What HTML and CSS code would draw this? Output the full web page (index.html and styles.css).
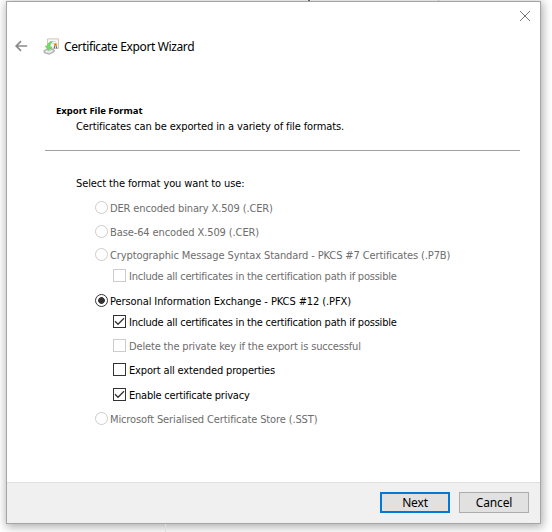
FILE: index.html
```html
<!DOCTYPE html>
<html lang="en">
<head>
<meta charset="utf-8">
<title>Certificate Export Wizard</title>
<link rel="stylesheet" href="styles.css">
</head>
<body>
<i class="edge-top"></i><i class="edge-bottom"></i><i class="edge-tick"></i>
<main class="window">
  <div class="caption">
    <svg width="10" height="10" viewBox="0 0 10 10"><path d="M0 0l10 10M10 0L0 10" stroke="#777" stroke-width="1" fill="none"/></svg>
  </div>
  <header class="title">
    <svg class="back" width="13" height="12" viewBox="0 0 13 12"><path d="M12.2 6H1.4M6 1.2L1.2 6L6 10.8" fill="none" stroke="#8a8a8a" stroke-width="1.7"/></svg>
    <svg class="cert" width="17" height="17" viewBox="0 0 17 17">
      <path d="M4.5 .9h11v9.6h-11z" fill="#f6f7f6" stroke="#d3c6ae"/>
      <path d="M7 3.5h6M9 5.5h3" stroke="#d5dce4"/>
      <path d="M1 12.5l5-2.2 5.5 1.7-.5 2-5 2.3-5-1.6z" fill="#d2d5d5" stroke="#8f9496" stroke-width=".7"/>
      <path d="M3 13.2l3.3 1 3-1.5" stroke="#f7f8f8" fill="none"/>
      <path d="M11.6 8.2l-.3 2.2M13.3 8.2l.4 2.2" fill="none" stroke="#3276d2" stroke-width="1.2"/>
      <circle cx="12.5" cy="6.8" r="1.7" fill="#f0a52a"/><circle cx="12.4" cy="6.6" r=".7" fill="#c37510"/>
      <path d="M9.5 3.5C6 3.8 4.6 5.8 4.5 8H2.3l3 4.3L9.2 9H6.9C7 6.7 7.8 5 9.5 3.5z" fill="#74df63" stroke="#50bc46" stroke-width=".5"/>
    </svg>
    <h1>Certificate Export Wizard</h1>
  </header>
  <section class="intro">
    <h2>Export File Format</h2>
    <p>Certificates can be exported in a variety of file formats.</p>
  </section>
  <form class="options">
    <p class="prompt">Select the format you want to use:</p>
    <div class="row off g3"><i class="radio"></i><span class="t1">DER encoded binary X.509 (.CER)</span></div>
    <div class="row off g3"><i class="radio"></i><span class="t2">Base-64 encoded X.509 (.CER)</span></div>
    <div class="row off g2"><i class="radio"></i><span class="t3">Cryptographic Message Syntax Standard - PKCS #7 Certificates (.P7B)</span></div>
    <div class="row off sub"><i class="check"></i><span class="t4">Include all certificates in the certification path if possible</span></div>
    <div class="row g4"><i class="radio on"></i><span class="t5">Personal Information Exchange - PKCS #12 (.PFX)</span></div>
    <div class="row sub"><i class="check"><svg width="11" height="11" viewBox="0 0 11 11"><path d="M1 5.3l3 3L10 2.2"/></svg></i><span class="t6">Include all certificates in the certification path if possible</span></div>
    <div class="row off sub g3"><i class="check"></i><span class="t7">Delete the private key if the export is successful</span></div>
    <div class="row sub g3"><i class="check"></i><span class="t8">Export all extended properties</span></div>
    <div class="row sub g4"><i class="check"><svg width="11" height="11" viewBox="0 0 11 11"><path d="M1 5.3l3 3L10 2.2"/></svg></i><span class="t9">Enable certificate privacy</span></div>
    <div class="row off g3"><i class="radio"></i><span class="t10">Microsoft Serialised Certificate Store (.SST)</span></div>
  </form>
  <footer class="actions">
    <button class="primary" type="button">Next</button>
    <button type="button">Cancel</button>
  </footer>
</main>
</body>
</html>
```
FILE: styles.css
```css
* { box-sizing: border-box; }
body {
  margin: 0; width: 552px; height: 532px; padding: 1px 0 0 6px;
  overflow: hidden; position: relative; background: #fff;
  font: 11px/20px "DejaVu Sans Condensed", "Noto Sans", sans-serif; color: #000;
}
h1, h2, p { margin: 0; font-weight: 400; white-space: nowrap; }
.window {
  position: relative; width: 535px; height: 523px; display: flex; flex-direction: column;
  border: 1px solid #a5a5a5; background: #fff;
  box-shadow: 1px 2px 9px 1px rgba(0,0,0,.32);
}
.edge-top { position: absolute; left: 308px; top: 0; width: 2px; height: 1px; background: #666; z-index: 1; }
.edge-bottom { position: absolute; left: 165px; top: 524px; width: 1px; height: 8px; background: #ddd; z-index: 1; }
.edge-tick { position: absolute; left: 438px; top: 0; width: 1px; height: 1px; background: #bbb; z-index: 1; }
.caption { height: 29px; padding: 9px 10px 0 0; display: flex; justify-content: flex-end; }
.title { display: flex; align-items: center; height: 30px; padding-left: 8px; }
.cert { margin: 0 4px 0 15px; }
.title h1 { font: 12px/20px "Noto Sans", sans-serif; letter-spacing: -.37px; padding-top: 2px; }
.intro { margin: 40px 20px 0 38px; height: 50px; border-bottom: 1px solid #a0a0a0; padding-left: 11px; }
.intro h2 { font: 700 9.5px/16px "Noto Sans", sans-serif; letter-spacing: -.03px; padding-top: 2px; }
.intro p { padding: 0 0 0 20px; line-height: 16px; letter-spacing: -.12px; }
.options { flex: 1; padding: 21px 0 0 88px; }
.prompt { margin-left: -19px; padding-top: 1px; line-height: 21px; height: 22px; letter-spacing: -.1px; }
.row { display: flex; align-items: center; height: 21px; white-space: nowrap; }
.row span { padding-top: 2px; }
.t1 { letter-spacing: -.13px; }
.t2 { letter-spacing: -.1px; }
.t3 { letter-spacing: -.11px; }
.t4, .t6 { letter-spacing: -.22px; }
.t5 { letter-spacing: -.09px; }
.t7 { letter-spacing: -.16px; }
.t8 { letter-spacing: -.15px; }
.t9 { letter-spacing: -.22px; }
.t10 { letter-spacing: -.12px; }
.off { color: #6d6d6d; }
.sub { padding-left: 18px; }
.g2 { margin-top: 2px; }
.g3 { margin-top: 3px; }
.g4 { margin-top: 4px; }
.radio, .check { flex: none; width: 13px; height: 13px; border: 1px solid #333; margin-right: 2px; }
.check { margin-right: 3px; }
.radio { border-radius: 50%; }
.off .radio, .off .check { border-color: #ccc; }
.on { background: radial-gradient(circle, #333 3px, #fff 3.7px); }
.check svg { display: block; fill: none; stroke: #333; stroke-width: 1.3; }
.actions {
  height: 41px; background: #f0f0f0; border-top: 1px solid #dfdfdf;
  display: flex; justify-content: flex-end; gap: 9px; padding: 9px 11px 0 0;
}
button {
  width: 70px; height: 21px; padding: 0; border: 1px solid #adadad; background: #e1e1e1;
  font: 12px/17px "Noto Sans", sans-serif; letter-spacing: -.15px; color: #000;
}
.primary { border: 2px solid #0078d7; }
```
